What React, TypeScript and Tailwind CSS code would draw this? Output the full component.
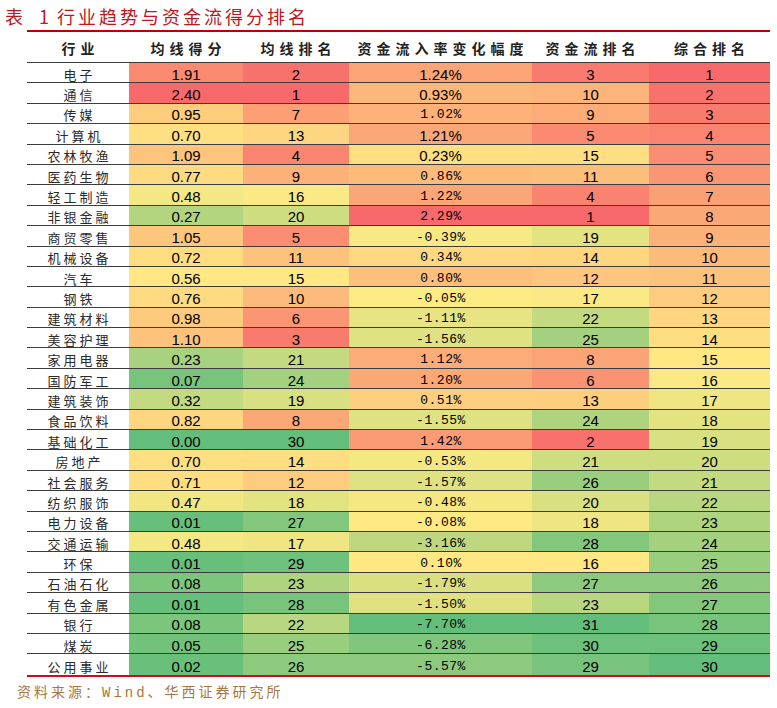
import React from "react";

// [行业, 均线得分, 均线排名, 资金流入率变化幅度(%), 资金流排名, 综合排名]
const rows: [string, number, number, number, number, number][] = [
  ["电子", 1.91, 2, 1.24, 3, 1],
  ["通信", 2.4, 1, 0.93, 10, 2],
  ["传媒", 0.95, 7, 1.02, 9, 3],
  ["计算机", 0.7, 13, 1.21, 5, 4],
  ["农林牧渔", 1.09, 4, 0.23, 15, 5],
  ["医药生物", 0.77, 9, 0.86, 11, 6],
  ["轻工制造", 0.48, 16, 1.22, 4, 7],
  ["非银金融", 0.27, 20, 2.29, 1, 8],
  ["商贸零售", 1.05, 5, -0.39, 19, 9],
  ["机械设备", 0.72, 11, 0.34, 14, 10],
  ["汽车", 0.56, 15, 0.8, 12, 11],
  ["钢铁", 0.76, 10, -0.05, 17, 12],
  ["建筑材料", 0.98, 6, -1.11, 22, 13],
  ["美容护理", 1.1, 3, -1.56, 25, 14],
  ["家用电器", 0.23, 21, 1.12, 8, 15],
  ["国防军工", 0.07, 24, 1.2, 6, 16],
  ["建筑装饰", 0.32, 19, 0.51, 13, 17],
  ["食品饮料", 0.82, 8, -1.55, 24, 18],
  ["基础化工", 0.0, 30, 1.42, 2, 19],
  ["房地产", 0.7, 14, -0.53, 21, 20],
  ["社会服务", 0.71, 12, -1.57, 26, 21],
  ["纺织服饰", 0.47, 18, -0.48, 20, 22],
  ["电力设备", 0.01, 27, -0.08, 18, 23],
  ["交通运输", 0.48, 17, -3.16, 28, 24],
  ["环保", 0.01, 29, 0.1, 16, 25],
  ["石油石化", 0.08, 23, -1.79, 27, 26],
  ["有色金属", 0.01, 28, -1.5, 23, 27],
  ["银行", 0.08, 22, -7.7, 31, 28],
  ["煤炭", 0.05, 25, -6.28, 30, 29],
  ["公用事业", 0.02, 26, -5.57, 29, 30],
];

// rows whose flow value is shown in Arial in the source sheet
const arialFlow = new Set([0, 1, 3, 4]);

const GREEN = [99, 190, 123];
const YELLOW = [255, 235, 132];
const RED = [248, 105, 107];

const mix = (a: number[], b: number[], t: number) =>
  `rgb(${a.map((c, i) => Math.round(c + (b[i] - c) * t)).join(",")})`;

// excel style 3-colour scale, midpoint = 50th percentile
const makeScale = (vals: number[], highIsRed: boolean) => {
  const s = [...vals].sort((a, b) => a - b);
  const pos = (s.length - 1) * 0.5;
  const lo = Math.floor(pos);
  const mid = s[lo] + (s[Math.ceil(pos)] - s[lo]) * (pos - lo);
  const min = s[0];
  const max = s[s.length - 1];
  const top = highIsRed ? RED : GREEN;
  const bottom = highIsRed ? GREEN : RED;
  return (v: number) =>
    v >= mid
      ? mix(YELLOW, top, max === mid ? 0 : (v - mid) / (max - mid))
      : mix(YELLOW, bottom, (mid - v) / (mid - min));
};

const scoreColor = makeScale(rows.map((r) => r[1]), true);
const rankColor = makeScale(rows.map((r) => r[2]), false);
const flowColor = makeScale(rows.map((r) => r[3]), true);
const flowRankColor = makeScale(rows.map((r) => r[4]), false);
const totalColor = makeScale(rows.map((r) => r[5]), false);

const cols = "grid grid-cols-[102px_114px_106px_183px_117px_121px]";
const headers = ["行业", "均线得分", "均线排名", "资金流入率变化幅度", "资金流排名", "综合排名"];

const Cell = ({ bg, children, className = "" }: { bg?: string; children: React.ReactNode; className?: string }) => (
  <div
    className={`flex items-center justify-center pt-[3px] leading-none text-black ${className}`}
    style={bg ? { backgroundColor: bg } : undefined}
  >
    {children}
  </div>
);

const arial = "text-[15px] font-['Liberation_Sans',Arial,sans-serif]";
const mono = "text-[13px] tracking-[0.5px] pl-[1px] font-['Liberation_Mono',monospace]";

export default function App() {
  return (
    <div className="w-[777px] h-[708px] bg-white overflow-hidden font-['Noto_Sans_CJK_SC',sans-serif]">
      <div className="pl-[5px] pt-[4px] pb-[2px] h-[30px] text-[18px] leading-[24px] tracking-[3px] text-[#c0161c]">
        表 <span className="ml-[6px]">1</span> <span className="-ml-[2px]">行业趋势与资金流得分排名</span>
      </div>

      <div className="ml-[27px] w-[743px]">
        <div className={`${cols} h-[33px] border-t-2 border-b border-t-[#c00000] border-b-[#3a3a3a]`}>
          {headers.map((h) => (
            <div
              key={h}
              className="flex items-center justify-center pt-[3px] pl-[5px] text-[14px] font-bold tracking-[5px] text-[#222]"
            >
              {h}
            </div>
          ))}
        </div>

        <div className="border-b-2 border-[#c8101a]">
          {rows.map((r, i) => (
            <div key={r[0]} className={`${cols} h-[20.4px] border-b border-[#3c3c3c] last:border-b-0`}>
              <div className="flex items-center justify-center pt-[3px] pl-[3px] text-[13px] leading-none tracking-[3px] text-[#2a2a2a]">
                {r[0]}
              </div>
              <Cell bg={scoreColor(r[1])} className={arial}>{r[1].toFixed(2)}</Cell>
              <Cell bg={rankColor(r[2])} className={arial}>{r[2]}</Cell>
              <Cell bg={flowColor(r[3])} className={arialFlow.has(i) ? arial : mono}>
                {r[3].toFixed(2)}%
              </Cell>
              <Cell bg={flowRankColor(r[4])} className={arial}>{r[4]}</Cell>
              <Cell bg={totalColor(r[5])} className={arial}>{r[5]}</Cell>
            </div>
          ))}
        </div>
      </div>

      <div className="pl-[17px] mt-[6px] text-[14px] leading-[20px] tracking-[3px] text-[#a6773f] font-['Liberation_Mono','Noto_Sans_CJK_SC',monospace]">
        资料来源：Wind、华西证券研究所
      </div>
    </div>
  );
}
